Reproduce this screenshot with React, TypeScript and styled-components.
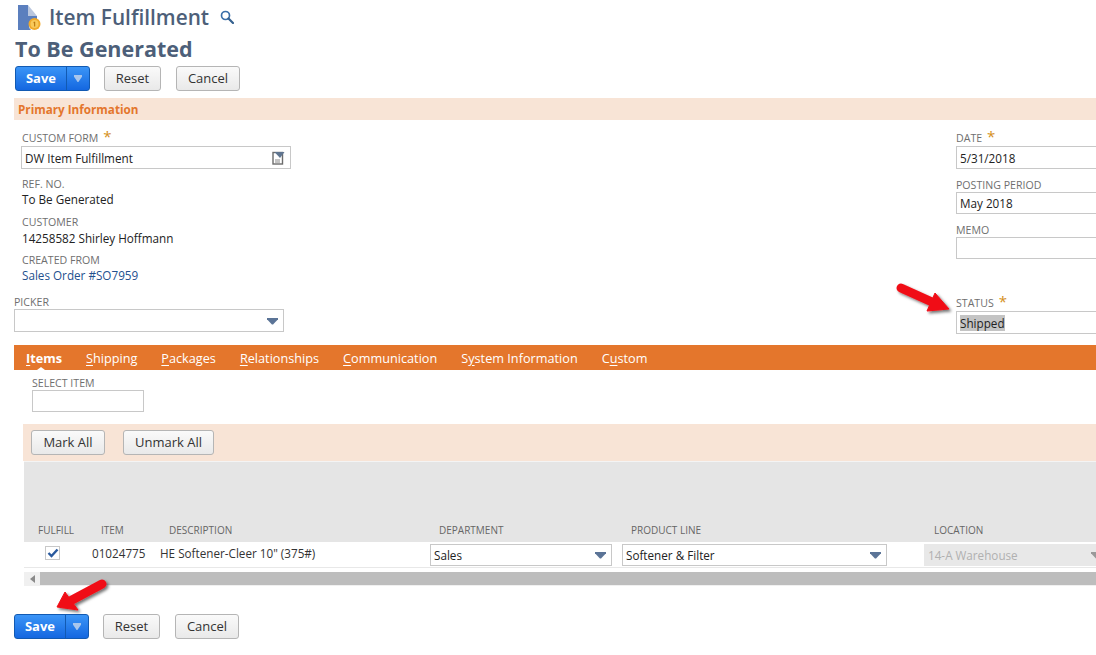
import React from 'react';
import styled, { createGlobalStyle } from 'styled-components';

const GlobalStyle = createGlobalStyle`
  html, body {
    margin: 0;
    padding: 0;
    background: #fff;
    font-family: "Open Sans", "Liberation Sans", sans-serif;
  }
`;

const Page = styled.div`
  position: relative;
  width: 1096px;
  height: 655px;
  overflow: hidden;
  background: #fff;
`;

const TitleRow = styled.div`
  display: flex;
  align-items: center;
  height: 34px;
  padding-left: 18px;
`;

const PageTitle = styled.div`
  margin-left: 8px;
  font-size: 20.8px;
  font-weight: 600;
  color: #4d5f79;
  line-height: 34px;
`;

const SearchWrap = styled.span`
  display: flex;
  margin-left: 11px;
`;

const RecordName = styled.div`
  height: 30px;
  margin-left: 15px;
  font-size: 21.5px;
  font-weight: 700;
  line-height: 29px;
  color: #4d5f79;
`;

const ButtonRow = styled.div<{ $left: number; $top: number }>`
  display: flex;
  margin-top: ${(p) => p.$top}px;
  padding-left: ${(p) => p.$left}px;
`;

const SplitButton = styled.div`
  display: flex;
  width: 75px;
  height: 25px;
  box-sizing: border-box;
  border: 1px solid #125ab2;
  border-radius: 3px;
  background: linear-gradient(#3b95f7, #1467e0);
  color: #fff;
  font-size: 13px;
  font-weight: 700;
`;

const SplitLabel = styled.div`
  flex: 0 0 50px;
  text-align: center;
  line-height: 23px;
  border-right: 1px solid #125ab2;
`;

const SplitArrow = styled.div`
  flex: 1;
  display: flex;
  align-items: center;
  justify-content: center;
`;

const GrayButton = styled.div<{ $w: number; $ml: number }>`
  width: ${(p) => p.$w}px;
  height: 25px;
  margin-left: ${(p) => p.$ml}px;
  box-sizing: border-box;
  border: 1px solid #b5b5b5;
  border-radius: 3px;
  background: linear-gradient(#fafafa, #e9e9e9);
  color: #333;
  font-size: 13px;
  font-weight: 500;
  text-align: center;
  line-height: 23px;
`;

const SectionBand = styled.div`
  height: 22px;
  margin: 7px 0 0 14px;
  padding-left: 4px;
  background: #f8e4d6;
  color: #e4762c;
  font-size: 11.7px;
  font-weight: 700;
  line-height: 23px;
`;

const FormArea = styled.div`
  display: flex;
  justify-content: space-between;
  height: 225px;
  padding-left: 14px;
`;

const LeftColumn = styled.div`
  width: 290px;
`;

const RightColumn = styled.div`
  width: 140px;
`;

const Label = styled.div<{ $top?: number; $indent?: number }>`
  margin-top: ${(p) => p.$top ?? 0}px;
  margin-left: ${(p) => p.$indent ?? 0}px;
  font-size: 10.6px;
  line-height: 14px;
  height: 14px;
  color: #6f6f6f;
  white-space: nowrap;
`;

const Required = styled.span`
  margin-left: 5px;
  color: #d5901a;
  font-size: 15px;
  line-height: 0;
`;

const Value = styled.div<{ $link?: boolean; $top?: number }>`
  margin-top: ${(p) => p.$top ?? 0}px;
  margin-left: 8px;
  height: 16px;
  font-size: 11.7px;
  line-height: 16px;
  color: ${(p) => (p.$link ? '#23508e' : '#222')};
`;

const Box = styled.div<{ $w: number; $h: number; $top?: number; $indent?: number; $disabled?: boolean; $raised?: boolean }>`
  display: flex;
  align-items: center;
  justify-content: space-between;
  width: ${(p) => p.$w}px;
  height: ${(p) => p.$h}px;
  margin-top: ${(p) => p.$top ?? 0}px;
  margin-left: ${(p) => p.$indent ?? 0}px;
  padding: ${(p) => (p.$raised ? '0 3px' : '1px 3px 0')};
  box-sizing: border-box;
  flex: none;
  border: 1px solid ${(p) => (p.$disabled ? '#e8e8e8' : '#c8c8c8')};
  background: ${(p) => (p.$disabled ? '#e8e8e8' : '#fff')};
  font-size: 11.7px;
  color: ${(p) => (p.$disabled ? '#b0b0b0' : '#222')};
  white-space: nowrap;
`;

const Selected = styled.span`
  background: #c4c4c4;
`;

const CaretShape = styled.span<{ $color?: string; $small?: boolean }>`
  display: block;
  flex: none;
  width: ${(p) => (p.$small ? 8 : 11)}px;
  height: 7px;
  margin-right: ${(p) => (p.$small ? 0 : 2)}px;
  background: ${(p) => p.$color ?? '#5b7497'};
  clip-path: polygon(0 0, 100% 0, 100% 25%, 55% 100%, 45% 100%, 0 25%);
`;

const TabBar = styled.div`
  position: relative;
  display: flex;
  height: 25px;
  margin-left: 14px;
  background: #e4762c;
  color: #fff;
  font-size: 12.7px;
  line-height: 27px;
`;

const Tab = styled.div<{ $left: number; $active?: boolean }>`
  margin-left: ${(p) => p.$left}px;
  font-weight: ${(p) => (p.$active ? 700 : 400)};
  white-space: nowrap;
  u { text-underline-offset: 2px; }
  ${(p) => p.$active && `
    position: relative;
    &::after {
      content: '';
      position: absolute;
      left: 11px;
      bottom: 0;
      border: 4px solid transparent;
      border-top: 0;
      border-bottom: 3px solid #fff;
    }
  `}
`;

const SelectItem = styled.div`
  height: 54px;
  padding: 6px 0 0 32px;
  box-sizing: border-box;
`;

const MarkBand = styled.div`
  display: flex;
  align-items: center;
  height: 37px;
  margin-left: 23px;
  padding: 0 0 0 8px;
  background: #f8e4d6;
`;

const TableHead = styled.div`
  display: flex;
  align-items: flex-end;
  height: 81px;
  margin-left: 24px;
  border-top: 1px solid #f4f4f4;
  box-sizing: border-box;
  padding-bottom: 5px;
  background: #e5e5e5;
`;

const HeadCell = styled.div<{ $w: number }>`
  flex: 0 0 ${(p) => p.$w}px;
  font-size: 10px;
  line-height: 14px;
  color: #666;
  white-space: nowrap;
`;

const TableRow = styled.div`
  display: flex;
  align-items: center;
  height: 26px;
  margin-left: 24px;
  border-bottom: 1px solid #e8e8e8;
  box-sizing: border-box;
  font-size: 11.7px;
  color: #333;
`;

const Cell = styled.div<{ $w: number }>`
  flex: 0 0 ${(p) => p.$w}px;
  padding-bottom: 3px;
  white-space: nowrap;
`;

const CheckCell = styled.div`
  flex: 0 0 68px;
  padding: 0 0 4px 21px;
  box-sizing: border-box;
`;

const CheckBox = styled.div`
  display: flex;
  align-items: center;
  justify-content: center;
  width: 15px;
  height: 14px;
  box-sizing: border-box;
  border: 1px solid #c8c8c8;
`;

const ScrollTrack = styled.div`
  display: flex;
  height: 14px;
  margin: 4px 0 0 24px;
  background: #f0f0f0;
`;

const ScrollButton = styled.div`
  display: flex;
  align-items: center;
  justify-content: center;
  flex: 0 0 16px;
`;

const ScrollThumb = styled.div`
  flex: 1;
  height: 13px;
  background: #bdbdbd;
`;

const ArrowLayer = styled.svg`
  position: absolute;
  left: 0;
  top: 0;
  pointer-events: none;
`;

const DocIcon = () => (
  <svg width="23" height="25" viewBox="0 0 23 25">
    <path d="M0 0h10v11h9v4a6 6 0 0 0-6 10H0z" fill="#5b7fbe" />
    <path d="M10 0l9 11h-9z" fill="#b9c6de" />
    <circle cx="16.5" cy="19" r="6" fill="#f0a92b" />
    <circle cx="16.5" cy="19" r="4" fill="#f8c95a" />
    <path d="M15.8 16.8h1.4v4.6h-1.1v-3.4l-.7.2z" fill="#b9770e" />
  </svg>
);

const SearchIcon = () => (
  <svg width="14" height="14" viewBox="0 0 14 14">
    <circle cx="5.5" cy="5.5" r="4" fill="none" stroke="#3a6ea8" strokeWidth="1.7" />
    <path d="M8.5 8.5L13 13" stroke="#35618f" strokeWidth="2.2" strokeLinecap="round" />
  </svg>
);

const FormIconWrap = styled.span`
  display: flex;
  margin-right: 2px;
`;

const FormIcon = () => (
  <FormIconWrap>
    <svg width="13" height="14" viewBox="0 0 13 14">
      <rect x="1" y="1.5" width="9.5" height="11.5" fill="#fff" stroke="#6c6c6c" strokeWidth="1.4" />
      <path d="M2.5 1h10L8 7z" fill="#5f7590" />
      <path d="M3 9h5M3 11h5" stroke="#888" strokeWidth="1" />
    </svg>
  </FormIconWrap>
);

const CheckIcon = () => (
  <svg width="12" height="10" viewBox="0 0 12 10">
    <path d="M1.5 5l3 3L10.5 1.5" fill="none" stroke="#2a5a9e" strokeWidth="2.4" />
  </svg>
);

const ActionButtons = ({ left, top }: { left: number; top: number }) => (
  <ButtonRow $left={left} $top={top}>
    <SplitButton>
      <SplitLabel>Save</SplitLabel>
      <SplitArrow>
        <CaretShape $color="#a9c6ec" $small />
      </SplitArrow>
    </SplitButton>
    <GrayButton $w={57} $ml={14}>Reset</GrayButton>
    <GrayButton $w={64} $ml={15}>Cancel</GrayButton>
  </ButtonRow>
);

const tabs = [
  { left: 12, mark: 'I', rest: 'tems', active: true },
  { left: 24, mark: 'S', rest: 'hipping' },
  { left: 24, mark: 'P', rest: 'ackages' },
  { left: 24, mark: 'R', rest: 'elationships' },
  { left: 24, mark: 'C', rest: 'ommunication' },
  { left: 24, before: 'S', mark: 'y', rest: 'stem Information' },
  { left: 24, before: 'C', mark: 'u', rest: 'stom' },
];

export default function App() {
  return (
    <Page>
      <GlobalStyle />
      <TitleRow>
        <DocIcon />
        <PageTitle>Item Fulfillment</PageTitle>
        <SearchWrap><SearchIcon /></SearchWrap>
      </TitleRow>
      <RecordName>To Be Generated</RecordName>
      <ActionButtons left={15} top={2} />
      <SectionBand>Primary Information</SectionBand>

      <FormArea>
        <LeftColumn>
          <Label $top={11} $indent={8}>CUSTOM FORM<Required>*</Required></Label>
          <Box $w={270} $h={23} $top={1} $indent={7}>
            DW Item Fulfillment
            <FormIcon />
          </Box>
          <Label $top={8} $indent={8}>REF. NO.</Label>
          <Value>To Be Generated</Value>
          <Label $top={8} $indent={8}>CUSTOMER</Label>
          <Value $top={1}>14258582 Shirley Hoffmann</Value>
          <Label $top={7} $indent={8}>CREATED FROM</Label>
          <Value $link>Sales Order #SO7959</Value>
          <Label $top={12}>PICKER</Label>
          <Box $w={270} $h={23}>
            <span />
            <CaretShape />
          </Box>
        </LeftColumn>
        <RightColumn>
          <Label $top={11}>DATE<Required>*</Required></Label>
          <Box $w={200} $h={23} $top={1}>5/31/2018</Box>
          <Label $top={9}>POSTING PERIOD</Label>
          <Box $w={200} $h={22} $raised>May 2018</Box>
          <Label $top={9}>MEMO</Label>
          <Box $w={200} $h={22} />
          <Label $top={37}>STATUS<Required>*</Required></Label>
          <Box $w={200} $h={23} $top={1}><Selected>Shipped</Selected></Box>
        </RightColumn>
      </FormArea>

      <TabBar>
        {tabs.map((t) => (
          <Tab key={t.rest} $left={t.left} $active={t.active}>
            {t.before}<u>{t.mark}</u>{t.rest}
          </Tab>
        ))}
      </TabBar>

      <SelectItem>
        <Label>SELECT ITEM</Label>
        <Box $w={112} $h={22} />
      </SelectItem>

      <MarkBand>
        <GrayButton $w={74} $ml={0}>Mark All</GrayButton>
        <GrayButton $w={91} $ml={18}>Unmark All</GrayButton>
      </MarkBand>

      <TableHead>
        <HeadCell $w={14} />
        <HeadCell $w={63}>FULFILL</HeadCell>
        <HeadCell $w={68}>ITEM</HeadCell>
        <HeadCell $w={270}>DESCRIPTION</HeadCell>
        <HeadCell $w={192}>DEPARTMENT</HeadCell>
        <HeadCell $w={303}>PRODUCT LINE</HeadCell>
        <HeadCell $w={100}>LOCATION</HeadCell>
      </TableHead>
      <TableRow>
        <CheckCell>
          <CheckBox><CheckIcon /></CheckBox>
        </CheckCell>
        <Cell $w={68}>01024775</Cell>
        <Cell $w={270}>HE Softener-Cleer 10" (375#)</Cell>
        <Box $w={182} $h={22}>Sales<CaretShape /></Box>
        <Box $w={265} $h={22} $indent={10}>Softener &amp; Filter<CaretShape /></Box>
        <Box $w={184} $h={22} $indent={37} $disabled>14-A Warehouse<CaretShape $color="#999" /></Box>
      </TableRow>
      <ScrollTrack>
        <ScrollButton>
          <svg width="5" height="8" viewBox="0 0 5 8"><path d="M5 0v8L0 4z" fill="#8a8a8a" /></svg>
        </ScrollButton>
        <ScrollThumb />
      </ScrollTrack>

      <ActionButtons left={14} top={28} />

      <ArrowLayer width="1096" height="655" viewBox="0 0 1096 655">
        <defs>
          <filter id="arrowShadow" x="-30%" y="-30%" width="160%" height="160%">
            <feDropShadow dx="2" dy="2" stdDeviation="1.5" floodColor="#000" floodOpacity="0.55" />
          </filter>
        </defs>
        <g filter="url(#arrowShadow)" fill="#f00d16" stroke="#f00d16">
          <path d="M901 288L932 302" strokeWidth="9" strokeLinecap="round" fill="none" />
          <path d="M935 293L949 309L927 311z" strokeWidth="1" strokeLinejoin="round" />
          <path d="M102 584L72 600" strokeWidth="9" strokeLinecap="round" fill="none" />
          <path d="M65 592L57 607L78 610z" strokeWidth="1" strokeLinejoin="round" />
        </g>
      </ArrowLayer>
    </Page>
  );
}
